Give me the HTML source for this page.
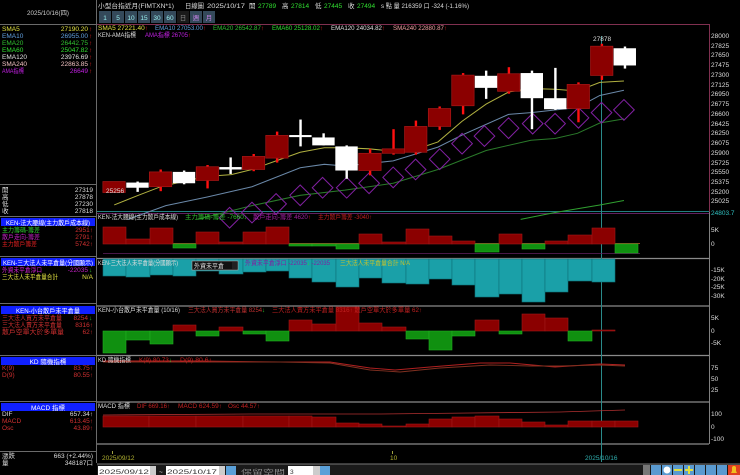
<!DOCTYPE html>
<html><head><meta charset="utf-8">
<style>
html,body{margin:0;padding:0;background:#000;width:740px;height:475px;overflow:hidden}
svg{display:block}
text{font-family:"Liberation Sans","Noto Sans CJK TC",sans-serif;font-size:6.5px}
</style></head><body>
<svg width="740" height="475" viewBox="0 0 740 475" xmlns="http://www.w3.org/2000/svg">
<rect width="740" height="475" fill="#000"/>
<g stroke="#6a6a6a" stroke-width="1" fill="none">
<line x1="96.5" y1="0" x2="96.5" y2="463"/>
<line x1="0" y1="24.5" x2="96" y2="24.5"/>
<line x1="0" y1="184.5" x2="96" y2="184.5"/>
<line x1="0" y1="216.5" x2="96" y2="216.5"/>
<line x1="0" y1="256.5" x2="96" y2="256.5"/>
<line x1="0" y1="303.5" x2="96" y2="303.5"/>
<line x1="0" y1="355.5" x2="96" y2="355.5"/>
<line x1="0" y1="401.5" x2="96" y2="401.5"/>
<line x1="0" y1="451.5" x2="96" y2="451.5"/>
</g>
<text x="27" y="15" fill="#ccc" textLength="42" lengthAdjust="spacingAndGlyphs">2025/10/16(四)</text>
<g>
<text x="2" y="31" fill="#e0e040">SMA5</text><text x="88" y="31" fill="#e0e040" text-anchor="end">27190.20</text>
<text x="2" y="38" fill="#60a0e0">EMA10</text><text x="88" y="38" fill="#60a0e0" text-anchor="end">26955.00</text>
<text x="2" y="45" fill="#30c030">EMA20</text><text x="88" y="45" fill="#30c030" text-anchor="end">26442.75</text>
<text x="2" y="52" fill="#30e030">EMA60</text><text x="88" y="52" fill="#30e030" text-anchor="end">25047.82</text>
<text x="2" y="59" fill="#e0e0e0">EMA120</text><text x="88" y="59" fill="#e0e0e0" text-anchor="end">23976.69</text>
<text x="2" y="66" fill="#f0c0c0">SMA240</text><text x="88" y="66" fill="#f0c0c0" text-anchor="end">22863.85</text>
<text x="2" y="73" fill="#c020e0" textLength="22" lengthAdjust="spacingAndGlyphs">AMA指標</text><text x="88" y="73" fill="#c020e0" text-anchor="end">26649</text>
<g fill="#e02020"><text x="89" y="31">↑</text><text x="89" y="38">↑</text><text x="89" y="45">↑</text><text x="89" y="52">↑</text><text x="89" y="59">↑</text><text x="89" y="66">↑</text><text x="89" y="73">↑</text></g>
</g>
<g fill="#ddd">
<text x="2" y="192">開</text><text x="93" y="192" text-anchor="end">27319</text>
<text x="2" y="199">高</text><text x="93" y="199" text-anchor="end">27878</text>
<text x="2" y="206">低</text><text x="93" y="206" text-anchor="end">27230</text>
<text x="2" y="213">收</text><text x="93" y="213" text-anchor="end">27818</text>
</g>
<rect x="1" y="218" width="94" height="8" fill="#1020ff"/>
<text x="6" y="225" fill="#fff" textLength="84" lengthAdjust="spacingAndGlyphs">KEN-法大腰線(主力散戶成本線)</text>
<g>
<text x="2" y="232" fill="#30d030" textLength="38" lengthAdjust="spacingAndGlyphs">主力籌碼-籌差</text><text x="93" y="232" fill="#d03030" text-anchor="end">2951↑</text>
<text x="2" y="239" fill="#c020c0" textLength="38" lengthAdjust="spacingAndGlyphs">散戶走向-籌差</text><text x="93" y="239" fill="#d03030" text-anchor="end">2791↑</text>
<text x="2" y="246" fill="#e02020" textLength="35" lengthAdjust="spacingAndGlyphs">主力散戶籌差</text><text x="93" y="246" fill="#d03030" text-anchor="end">5742↑</text>
</g>
<rect x="1" y="258" width="94" height="8" fill="#1020ff"/>
<text x="3" y="265" fill="#fff" textLength="90" lengthAdjust="spacingAndGlyphs">KEN-三大法人未平倉量(分國顯示)</text>
<g>
<text x="2" y="272" fill="#d020d0" textLength="40" lengthAdjust="spacingAndGlyphs">外資未平倉淨口</text><text x="88" y="272" fill="#c020c0" text-anchor="end">-22035</text><text x="89" y="272" fill="#30c030">↓</text>
<text x="2" y="279" fill="#e0e040" textLength="56" lengthAdjust="spacingAndGlyphs">三大法人未平倉量合計</text><text x="93" y="279" fill="#e0e040" text-anchor="end">N/A</text>
</g>
<rect x="1" y="306" width="94" height="8" fill="#1020ff"/>
<text x="16" y="313" fill="#fff" textLength="64" lengthAdjust="spacingAndGlyphs">KEN-小台散戶未平倉量</text>
<g>
<text x="2" y="320" fill="#d03030" textLength="60" lengthAdjust="spacingAndGlyphs">三大法人買方未平倉量</text><text x="88" y="320" fill="#d03030" text-anchor="end">8254</text><text x="89" y="320" fill="#30c030">↓</text>
<text x="2" y="327" fill="#d03030" textLength="60" lengthAdjust="spacingAndGlyphs">三大法人賣方未平倉量</text><text x="93" y="327" fill="#d03030" text-anchor="end">8316↑</text>
<text x="2" y="334" fill="#d03030" textLength="62" lengthAdjust="spacingAndGlyphs">散戶空單大於多單量</text><text x="93" y="334" fill="#d03030" text-anchor="end">62↑</text>
</g>
<rect x="1" y="357" width="94" height="8" fill="#1020ff"/>
<text x="48" y="364" fill="#fff" text-anchor="middle">KD 隨機指標</text>
<g fill="#d03030">
<text x="2" y="370">K(9)</text><text x="93" y="370" text-anchor="end">83.75↑</text>
<text x="2" y="377">D(9)</text><text x="93" y="377" text-anchor="end">80.55↑</text>
</g>
<rect x="1" y="403" width="94" height="8" fill="#1020ff"/>
<text x="48" y="410" fill="#fff" text-anchor="middle">MACD 指標</text>
<g>
<text x="2" y="416" fill="#ddd">DIF</text><text x="93" y="416" fill="#ddd" text-anchor="end">657.34↑</text>
<text x="2" y="423" fill="#d03030">MACD</text><text x="93" y="423" fill="#d03030" text-anchor="end">613.45↑</text>
<text x="2" y="430" fill="#d03030">Osc</text><text x="93" y="430" fill="#d03030" text-anchor="end">43.89↑</text>
</g>
<g fill="#ddd">
<text x="2" y="458">漲跌</text><text x="93" y="458" text-anchor="end">663 (+2.44%)</text>
<text x="2" y="465">量</text><text x="93" y="465" text-anchor="end">348187口</text>
</g>

<!-- top header -->
<g font-size="7.5">
<text x="98" y="8" fill="#ddd" textLength="76" lengthAdjust="spacingAndGlyphs">小型台指近月(FIMTXN*1)</text>
<text x="185" y="8" fill="#ddd" textLength="19" lengthAdjust="spacingAndGlyphs">日線圖</text>
<text x="207" y="8" fill="#ddd" textLength="38" lengthAdjust="spacingAndGlyphs">2025/10/17</text>
<text x="249" y="8" fill="#ddd">開</text><text x="258" y="8" fill="#30e030">27789</text>
<text x="282" y="8" fill="#ddd">高</text><text x="291" y="8" fill="#30e030">27814</text>
<text x="315" y="8" fill="#ddd">低</text><text x="324" y="8" fill="#30e030">27445</text>
<text x="348" y="8" fill="#ddd">收</text><text x="357" y="8" fill="#30e030">27494</text>
<text x="381" y="8" fill="#ddd" textLength="88" lengthAdjust="spacingAndGlyphs">s 點  量 216359 口  -324 (-1.16%)</text>
</g>
<g font-size="7">
<rect x="99" y="11" width="12" height="12" fill="#34495a"/><text x="105" y="20" fill="#9ee" text-anchor="middle">1</text>
<rect x="112" y="11" width="12" height="12" fill="#34495a"/><text x="118" y="20" fill="#9ee" text-anchor="middle">5</text>
<rect x="125" y="11" width="12" height="12" fill="#34495a"/><text x="131" y="20" fill="#9ee" text-anchor="middle">10</text>
<rect x="138" y="11" width="12" height="12" fill="#34495a"/><text x="144" y="20" fill="#9ee" text-anchor="middle">15</text>
<rect x="151" y="11" width="12" height="12" fill="#34495a"/><text x="157" y="20" fill="#9ee" text-anchor="middle">30</text>
<rect x="164" y="11" width="12" height="12" fill="#34495a"/><text x="170" y="20" fill="#9ee" text-anchor="middle">60</text>
<rect x="177" y="11" width="12" height="12" fill="#1a1a1a"/><text x="183" y="20" fill="#888" text-anchor="middle">日</text>
<rect x="190" y="11" width="12" height="12" fill="#34495a"/><text x="196" y="20" fill="#c080e0" text-anchor="middle">週</text>
<rect x="203" y="11" width="12" height="12" fill="#34495a"/><text x="209" y="20" fill="#c080e0" text-anchor="middle">月</text>
</g>

<line x1="97" y1="24.5" x2="709" y2="24.5" stroke="#803050"/>
<line x1="709.5" y1="24" x2="709.5" y2="212" stroke="#803050"/>
<line x1="709.5" y1="212" x2="709.5" y2="444" stroke="#808080"/>
<line x1="97" y1="211.5" x2="709" y2="211.5" stroke="#208080"/>
<line x1="97" y1="213.5" x2="709" y2="213.5" stroke="#602060"/>
<g stroke="#8a8a8a" stroke-width="1.3">
<line x1="97" y1="258.5" x2="709" y2="258.5"/>
<line x1="97" y1="306" x2="709" y2="306"/>
<line x1="97" y1="355.5" x2="709" y2="355.5"/>
<line x1="97" y1="402" x2="709" y2="402"/>
<line x1="97" y1="444" x2="709" y2="444"/>
</g>
<line x1="601.5" y1="36" x2="601.5" y2="462" stroke="#2a8a8a"/>

<g>
<text x="98" y="30" fill="#e0e040" textLength="50" lengthAdjust="spacingAndGlyphs">SMA5 27221.40<tspan fill="#e02020">↑</tspan></text>
<text x="155" y="30" fill="#60a0e0" textLength="51" lengthAdjust="spacingAndGlyphs">EMA10 27053.00<tspan fill="#e02020">↑</tspan></text>
<text x="213" y="30" fill="#30c030" textLength="51" lengthAdjust="spacingAndGlyphs">EMA20 26542.87<tspan fill="#e02020">↑</tspan></text>
<text x="272" y="30" fill="#30e030" textLength="51" lengthAdjust="spacingAndGlyphs">EMA60 25128.02<tspan fill="#e02020">↑</tspan></text>
<text x="331" y="30" fill="#e0e0e0" textLength="54" lengthAdjust="spacingAndGlyphs">EMA120 24034.82<tspan fill="#e02020">↑</tspan></text>
<text x="393" y="30" fill="#f0a0a0" textLength="54" lengthAdjust="spacingAndGlyphs">SMA240 22880.87<tspan fill="#e02020">↑</tspan></text>
<text x="98" y="37" fill="#ddd" textLength="38" lengthAdjust="spacingAndGlyphs">KEN-AMA指標</text>
<text x="145" y="37" fill="#c020e0" textLength="46" lengthAdjust="spacingAndGlyphs">AMA指標 26705<tspan fill="#e02020">↑</tspan></text>
</g>
<g fill="#ddd">
<text x="711" y="38">28000</text><text x="711" y="48">27825</text><text x="711" y="57">27650</text>
<text x="711" y="67">27475</text><text x="711" y="77">27300</text><text x="711" y="87">27125</text>
<text x="711" y="96">26950</text><text x="711" y="106">26775</text><text x="711" y="116">26600</text>
<text x="711" y="126">26425</text><text x="711" y="135">26250</text><text x="711" y="145">26075</text>
<text x="711" y="155">25900</text><text x="711" y="165">25725</text><text x="711" y="174">25550</text>
<text x="711" y="184">25375</text><text x="711" y="194">25200</text><text x="711" y="203">25025</text>
<text x="711" y="215" fill="#30c0c0">24803.7</text>
</g>

<g transform="translate(97,30) scale(0.3444)">
<g fill="none" stroke-width="3">
<polyline stroke="#b0b040" points="50,508 120,480 185,455 250,440 320,425 390,420 450,405 520,380 590,355 660,342 720,342 790,345 860,352 930,345 990,325 1060,265 1130,215 1195,180 1260,170 1330,172 1395,177 1460,152 1530,148"/>
<polyline stroke="#6a88a8" points="90,550 200,510 320,485 450,455 590,400 660,390 720,395 860,380 990,340 1060,305 1195,245 1260,240 1395,225 1460,190 1530,175"/>
<polyline stroke="#2a7a2a" points="290,550 450,510 590,480 720,465 860,445 990,405 1130,350 1260,320 1330,315 1395,300 1460,270 1530,258"/>
<polyline stroke="#30a030" points="1230,550 1330,530 1460,508 1530,495"/>
</g>
<g fill="none" stroke="#8020a0" stroke-width="3">
<path d="M385,515 l30,30 l-30,30 l-30,-30z M450,500 l30,30 l-30,30 l-30,-30z M520,475 l30,30 l-30,30 l-30,-30z M590,450 l30,30 l-30,30 l-30,-30z M655,428 l30,30 l-30,30 l-30,-30z M725,428 l30,30 l-30,30 l-30,-30z M790,415 l30,30 l-30,30 l-30,-30z M860,398 l30,30 l-30,30 l-30,-30z M925,375 l30,30 l-30,30 l-30,-30z M995,345 l30,30 l-30,30 l-30,-30z M1060,300 l30,30 l-30,30 l-30,-30z M1125,278 l30,30 l-30,30 l-30,-30z M1195,255 l30,30 l-30,30 l-30,-30z M1265,242 l30,30 l-30,30 l-30,-30z M1330,242 l30,30 l-30,30 l-30,-30z M1398,225 l30,30 l-30,30 l-30,-30z M1465,210 l30,30 l-30,30 l-30,-30z M1530,202 l30,30 l-30,30 l-30,-30z"/>
</g>
<g stroke="#ff1010" stroke-width="7">
<line x1="185" y1="405" x2="185" y2="468"/><line x1="321" y1="392" x2="321" y2="460"/>
<line x1="455" y1="360" x2="455" y2="410"/><line x1="523" y1="295" x2="523" y2="385"/>
<line x1="793" y1="345" x2="793" y2="422"/><line x1="861" y1="288" x2="861" y2="362"/>
<line x1="926" y1="263" x2="926" y2="362"/><line x1="995" y1="222" x2="995" y2="290"/>
<line x1="1063" y1="125" x2="1063" y2="245"/><line x1="1196" y1="108" x2="1196" y2="185"/>
<line x1="1398" y1="152" x2="1398" y2="268"/><line x1="1466" y1="40" x2="1466" y2="145"/>
</g>
<g fill="#8b0000" stroke="#a81818" stroke-width="2">
<rect x="17" y="440" width="65" height="32"/><rect x="152" y="412" width="65" height="43"/>
<rect x="288" y="397" width="65" height="40"/><rect x="422" y="367" width="65" height="38"/>
<rect x="490" y="306" width="65" height="66"/><rect x="760" y="358" width="65" height="50"/>
<rect x="828" y="345" width="65" height="13"/><rect x="893" y="280" width="65" height="75"/>
<rect x="962" y="228" width="65" height="52"/><rect x="1030" y="131" width="65" height="89"/>
<rect x="1163" y="127" width="65" height="51"/><rect x="1365" y="158" width="65" height="70"/>
<rect x="1433" y="47" width="65" height="85"/>
</g>
<g stroke="#fff" stroke-width="7">
<line x1="118" y1="440" x2="118" y2="470"/><line x1="253" y1="408" x2="253" y2="448"/>
<line x1="388" y1="370" x2="388" y2="418"/><line x1="591" y1="260" x2="591" y2="338"/>
<line x1="658" y1="300" x2="658" y2="335"/><line x1="725" y1="335" x2="725" y2="432"/>
<line x1="1130" y1="118" x2="1130" y2="200"/><line x1="1263" y1="118" x2="1263" y2="288"/>
<line x1="1331" y1="110" x2="1331" y2="232"/><line x1="1533" y1="48" x2="1533" y2="112"/>
</g>
<g fill="#fff">
<rect x="85" y="443" width="65" height="15"/><rect x="220" y="412" width="65" height="33"/>
<rect x="355" y="398" width="65" height="7"/><rect x="558" y="305" width="65" height="6"/>
<rect x="625" y="312" width="65" height="23"/><rect x="692" y="338" width="65" height="70"/>
<rect x="1097" y="133" width="65" height="35"/><rect x="1230" y="125" width="65" height="73"/>
<rect x="1298" y="198" width="65" height="32"/><rect x="1500" y="53" width="65" height="50"/>
</g>
</g>
<text x="106" y="193" fill="#ddd">25256</text>
<text x="593" y="41" fill="#ddd">27878</text>

<!-- panel 2 -->
<g>
<text x="98" y="219" fill="#ddd" textLength="80" lengthAdjust="spacingAndGlyphs">KEN-法大腰線(主力散戶成本線)</text>
<text x="185" y="219" fill="#30c030" textLength="62" lengthAdjust="spacingAndGlyphs">主力籌碼-籌差 -7660<tspan fill="#30d030">↓</tspan></text>
<text x="253" y="219" fill="#a020a0" textLength="58" lengthAdjust="spacingAndGlyphs">散戶走向-籌差 4620<tspan fill="#e02020">↑</tspan></text>
<text x="318" y="219" fill="#c02020" textLength="54" lengthAdjust="spacingAndGlyphs">主力散戶籌差 -3040↑</text>
</g>
<line x1="103" y1="243.5" x2="640" y2="243.5" stroke="#c06030" stroke-width="0.8"/>
<line x1="103" y1="253.5" x2="640" y2="253.5" stroke="#602060" stroke-width="0.8"/>
<g fill="#8b0000" stroke="#a01818" stroke-width="0.6">
<rect x="103" y="227" width="23" height="17"/><rect x="126" y="239" width="24" height="5"/>
<rect x="150" y="228" width="23" height="16"/><rect x="196" y="232" width="23" height="12"/>
<rect x="219" y="242" width="24" height="2"/><rect x="243" y="232" width="23" height="12"/>
<rect x="266" y="227" width="23" height="17"/><rect x="359" y="234" width="23" height="10"/>
<rect x="382" y="242" width="24" height="2"/><rect x="406" y="229" width="23" height="15"/>
<rect x="429" y="236" width="23" height="8"/><rect x="452" y="241" width="23" height="3"/>
<rect x="499" y="234" width="23" height="10"/><rect x="545" y="241" width="23" height="3"/>
<rect x="568" y="235" width="24" height="9"/><rect x="592" y="228" width="23" height="16"/>
</g>
<g fill="#109010" stroke="#20b020" stroke-width="0.6">
<rect x="173" y="244" width="23" height="4"/><rect x="289" y="244" width="23" height="2"/>
<rect x="312" y="244" width="24" height="2"/><rect x="336" y="244" width="23" height="5"/>
<rect x="475" y="244" width="24" height="8"/><rect x="522" y="244" width="23" height="5"/>
<rect x="615" y="244" width="23" height="9"/>
</g>
<g fill="#ddd"><text x="711" y="232">5K</text><text x="711" y="246">0</text></g>

<!-- panel 3 -->
<g fill="#1aa0a8" stroke="#0c7078" stroke-width="0.6">
<rect x="103" y="259" width="23" height="17"/><rect x="126" y="259" width="24" height="18"/>
<rect x="150" y="259" width="23" height="16"/><rect x="173" y="259" width="23" height="17"/>
<rect x="196" y="259" width="23" height="12"/><rect x="219" y="259" width="24" height="15"/>
<rect x="243" y="259" width="23" height="13"/><rect x="266" y="259" width="23" height="12"/>
<rect x="289" y="259" width="23" height="19"/><rect x="312" y="259" width="24" height="23"/>
<rect x="336" y="259" width="23" height="28"/><rect x="359" y="259" width="23" height="19"/>
<rect x="382" y="259" width="24" height="24"/><rect x="406" y="259" width="23" height="25"/>
<rect x="429" y="259" width="23" height="20"/><rect x="452" y="259" width="23" height="26"/>
<rect x="475" y="259" width="24" height="38"/><rect x="499" y="259" width="23" height="35"/>
<rect x="522" y="259" width="23" height="43"/><rect x="545" y="259" width="23" height="33"/>
<rect x="568" y="259" width="24" height="22"/><rect x="592" y="259" width="23" height="23"/>
</g>
<g>
<text x="98" y="265" fill="#ddd" textLength="80" lengthAdjust="spacingAndGlyphs">KEN-三大法人未平倉量(分國顯示)</text>
<rect x="192" y="261" width="46" height="9" fill="#111" stroke="#aaa" stroke-width="0.6"/>
<text x="194" y="268" fill="#ddd" textLength="30" lengthAdjust="spacingAndGlyphs">外資未平倉</text>
<rect x="232" y="262" width="5" height="7" fill="#222"/>
<text x="245" y="265" fill="#8020a0" textLength="85" lengthAdjust="spacingAndGlyphs">外資未平倉淨口 -22035<tspan fill="#30d030">↓</tspan> -22035</text>
<text x="340" y="265" fill="#c0c030" textLength="70" lengthAdjust="spacingAndGlyphs">三大法人未平倉量合計 N/A</text>
</g>
<g fill="#ddd"><text x="711" y="272">-15K</text><text x="711" y="281">-20K</text><text x="711" y="289">-25K</text><text x="711" y="298">-30K</text></g>

<!-- panel 4 -->
<g fill="#8b0000" stroke="#a01818" stroke-width="0.6">
<rect x="173" y="325" width="23" height="6"/><rect x="219" y="327" width="24" height="4"/>
<rect x="289" y="320" width="23" height="11"/><rect x="312" y="324" width="24" height="7"/>
<rect x="336" y="307" width="23" height="24"/><rect x="359" y="323" width="23" height="8"/>
<rect x="382" y="327" width="24" height="4"/><rect x="475" y="320" width="24" height="11"/>
<rect x="522" y="314" width="23" height="17"/><rect x="545" y="318" width="23" height="13"/>
<rect x="592" y="330" width="23" height="1"/>
</g>
<g fill="#109010" stroke="#20b020" stroke-width="0.6">
<rect x="103" y="331" width="23" height="22"/><rect x="126" y="331" width="24" height="9"/>
<rect x="150" y="331" width="23" height="13"/><rect x="196" y="331" width="23" height="5"/>
<rect x="243" y="331" width="23" height="3"/><rect x="266" y="331" width="23" height="10"/>
<rect x="406" y="331" width="23" height="8"/><rect x="429" y="331" width="23" height="19"/>
<rect x="452" y="331" width="23" height="5"/><rect x="499" y="331" width="23" height="3"/>
<rect x="568" y="331" width="24" height="10"/>
</g>
<g>
<text x="98" y="312" fill="#ddd" textLength="82" lengthAdjust="spacingAndGlyphs">KEN-小台散戶未平倉量 (10/16)</text>
<text x="188" y="312" fill="#c03030" textLength="77" lengthAdjust="spacingAndGlyphs">三大法人買方未平倉量 8254<tspan fill="#30d030">↓</tspan></text>
<text x="272" y="312" fill="#c02020" textLength="150" lengthAdjust="spacingAndGlyphs">三大法人賣方未平倉量 8316↑ 散戶空單大於多單量 62↑</text>
</g>
<g fill="#ddd"><text x="711" y="320">5K</text><text x="711" y="333">0</text><text x="711" y="345">-5K</text></g>

<!-- KD -->
<g fill="none" stroke-width="0.9">
<polyline stroke="#b02020" points="103,361 200,361 280,362 330,362 370,368 395,370 430,367 480,363 510,363 555,367 600,364 625,365"/>
<polyline stroke="#803020" points="103,362 200,362 280,362 330,363 370,370 400,372 440,368 490,365 530,366 560,366 600,365 625,366"/>
</g>
<g>
<text x="98" y="362" fill="#ddd" textLength="33" lengthAdjust="spacingAndGlyphs">KD 隨機指標</text>
<text x="139" y="362" fill="#c02020" textLength="33" lengthAdjust="spacingAndGlyphs">K(9) 80.73<tspan fill="#30d030">↓</tspan></text>
<text x="180" y="362" fill="#c02020" textLength="32" lengthAdjust="spacingAndGlyphs">D(9) 80.6↑</text>
</g>
<g fill="#ddd"><text x="711" y="370">75</text><text x="711" y="381">50</text><text x="711" y="392">25</text></g>

<!-- MACD -->
<g fill="#8b0000" stroke="#a01818" stroke-width="0.6">
<rect x="103" y="416" width="46" height="11"/><rect x="149" y="416" width="47" height="11"/>
<rect x="196" y="416" width="47" height="11"/><rect x="243" y="416" width="46" height="11"/>
<rect x="289" y="416" width="23" height="11"/><rect x="312" y="417" width="24" height="10"/>
<rect x="336" y="423" width="23" height="4"/><rect x="359" y="424" width="23" height="3"/>
<rect x="382" y="426" width="24" height="1"/><rect x="406" y="424" width="23" height="3"/>
<rect x="429" y="419" width="23" height="8"/><rect x="452" y="417" width="23" height="10"/>
<rect x="475" y="416" width="24" height="11"/><rect x="499" y="419" width="23" height="8"/>
<rect x="522" y="422" width="23" height="5"/><rect x="545" y="425" width="23" height="2"/>
<rect x="568" y="421" width="24" height="6"/><rect x="592" y="421" width="23" height="6"/>
<rect x="615" y="421" width="23" height="6"/>
</g>
<polyline fill="none" stroke="#b03030" stroke-width="0.8" points="103,415 250,414 380,414 470,413 560,412 625,410"/>
<g>
<text x="98" y="408" fill="#ddd" textLength="32" lengthAdjust="spacingAndGlyphs">MACD 指標</text>
<text x="137" y="408" fill="#c02020" textLength="33" lengthAdjust="spacingAndGlyphs">DIF 669.16↑</text>
<text x="178" y="408" fill="#c02020" textLength="44" lengthAdjust="spacingAndGlyphs">MACD 624.59↑</text>
<text x="228" y="408" fill="#c02020" textLength="32" lengthAdjust="spacingAndGlyphs">Osc 44.57↑</text>
</g>
<g fill="#ddd"><text x="711" y="416">100</text><text x="711" y="429">0</text><text x="711" y="441">-100</text></g>

<line x1="112.5" y1="451" x2="112.5" y2="454" stroke="#a0a040"/>
<line x1="392.5" y1="451" x2="392.5" y2="454" stroke="#a0a040"/>
<g>
<text x="102" y="460" fill="#b0b030">2025/09/12</text>
<text x="390" y="460" fill="#b0b030">10</text>
<text x="585" y="460" fill="#30b0b0">2025/10/16</text>
</g>

<rect x="97" y="464" width="643" height="11" fill="#1a1a1a"/>
<line x1="97" y1="464" x2="740" y2="464" stroke="#777"/>
<rect x="98" y="466" width="55" height="9" fill="#fff"/>
<text x="99" y="474" fill="#333" font-size="8.5" textLength="50" lengthAdjust="spacingAndGlyphs">2025/09/12</text>
<rect x="150" y="466" width="6" height="9" fill="#ccc"/>
<text x="159" y="474" fill="#ddd" font-size="8">~</text>
<rect x="166" y="466" width="56" height="9" fill="#fff"/>
<text x="167" y="474" fill="#333" font-size="8.5" textLength="50" lengthAdjust="spacingAndGlyphs">2025/10/17</text>
<rect x="219" y="466" width="6" height="9" fill="#ccc"/>
<rect x="226" y="466" width="10" height="9" fill="#5aa0d8"/>
<text x="241" y="474" fill="#888" font-size="10" textLength="44" lengthAdjust="spacingAndGlyphs">保留空間</text>
<rect x="288" y="466" width="25" height="9" fill="#fff"/>
<text x="290" y="474" fill="#333" font-size="8">3</text>
<rect x="313" y="466" width="7" height="9" fill="#ccc"/>
<rect x="320" y="466" width="10" height="9" fill="#5aa0d8"/>
<rect x="643" y="465" width="7" height="10" fill="#777"/>
<g fill="#5a9ad0">
<rect x="651" y="465" width="10" height="10"/><rect x="662" y="465" width="10" height="10"/>
<rect x="673" y="465" width="10" height="10"/><rect x="684" y="465" width="10" height="10"/>
<rect x="695" y="465" width="10" height="10"/><rect x="706" y="465" width="10" height="10"/>
<rect x="717" y="465" width="10" height="10"/>
</g>
<circle cx="667" cy="470" r="3.5" fill="#fff"/>
<rect x="674" y="469" width="8" height="2" fill="#e0e040"/>
<rect x="685" y="469" width="8" height="2" fill="#e0e040"/><rect x="688" y="466" width="2" height="8" fill="#e0e040"/>
<rect x="728" y="465" width="12" height="10" fill="#e04020"/>
<path d="M731,473 h6 l-1,-2 v-3 a2,2 0 0 0 -4,0 v3z" fill="#f0c020"/>
</svg>
</body></html>
